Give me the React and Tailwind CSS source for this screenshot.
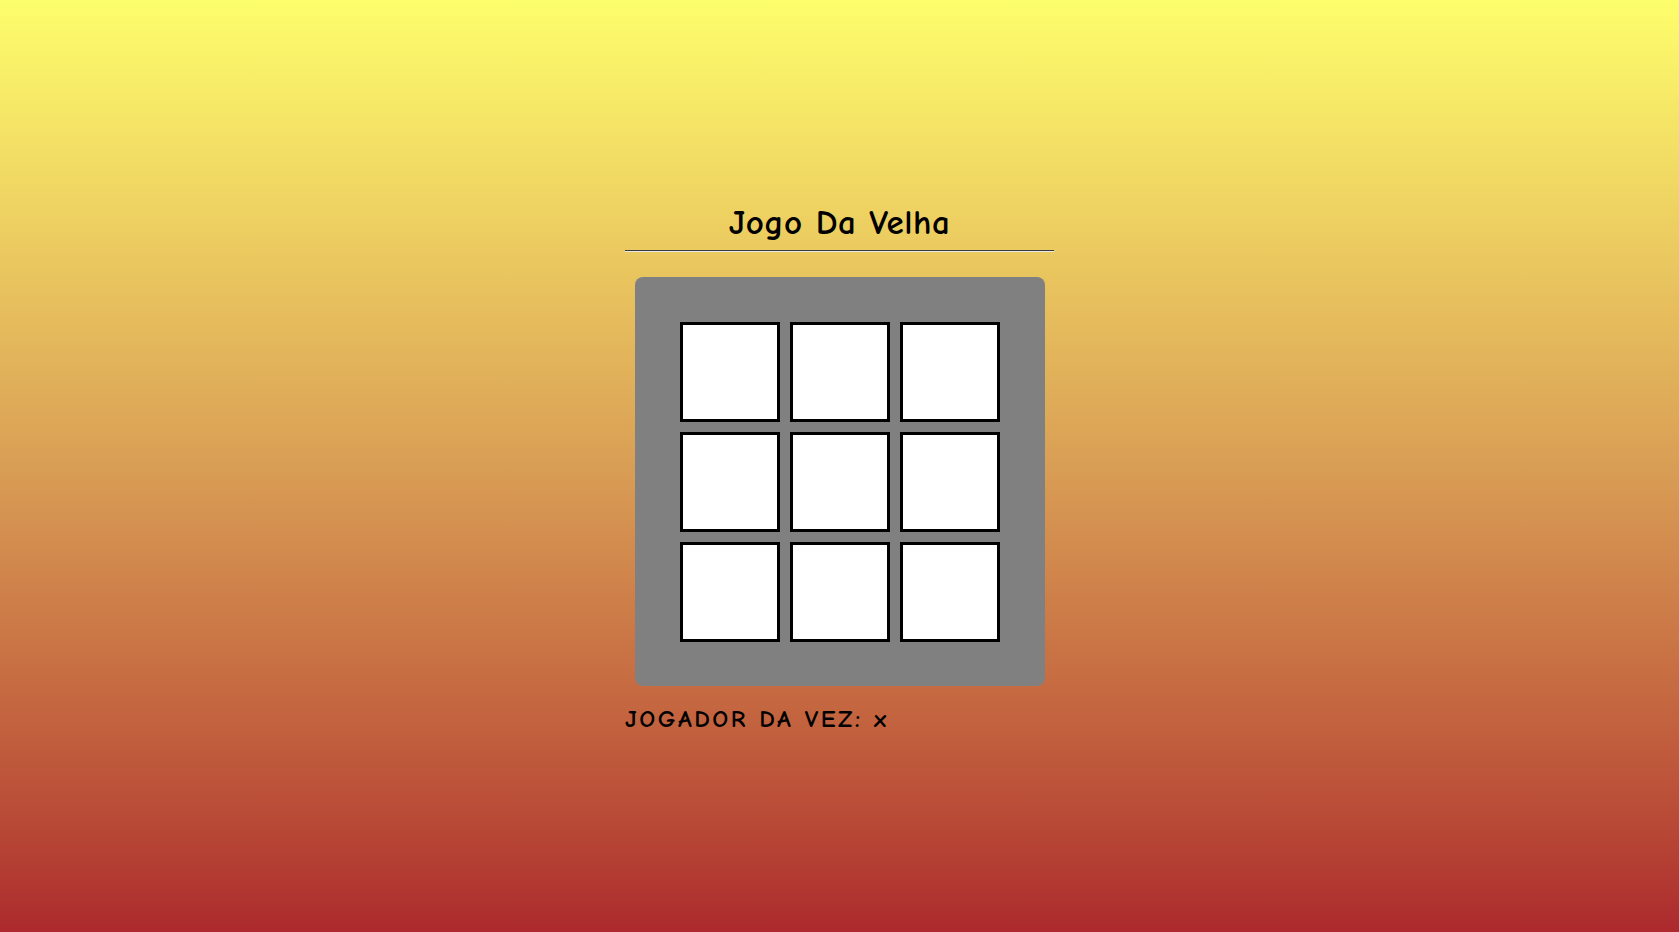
const cells = Array.from({ length: 9 })

export default function App() {
  return (
    <div
      className="min-h-screen w-full flex items-center justify-center bg-gradient-to-b from-[#fdfe6c] via-[#d99e55] to-[#ac292d]"
      style={{ fontFamily: '"Comic Sans MS", "Comic Neue", cursive' }}
    >
      <div className="w-[429px] flex flex-col pt-[4px]">
        <h1 className="text-[35px] leading-[40px] font-bold text-black text-center tracking-[0.015em]">Jogo Da Velha</h1>
        <div className="mt-[7px] border-t border-t-[#3a3a3a] border-b border-b-[#e8e8e8]" />
        <div className="mx-auto mt-[25px] w-[410px] h-[409px] bg-[#808080] rounded-lg p-[45px]">
          <div className="grid grid-cols-3 gap-[10px]">
            {cells.map((_, i) => (
              <button key={i} className="w-[100px] h-[100px] bg-white border-[3px] border-black" />
            ))}
          </div>
        </div>
        <p className="mt-[18px] text-[25px] leading-[30px] font-bold text-black tracking-[0.1em]">JOGADOR DA VEZ: x</p>
      </div>
    </div>
  )
}
